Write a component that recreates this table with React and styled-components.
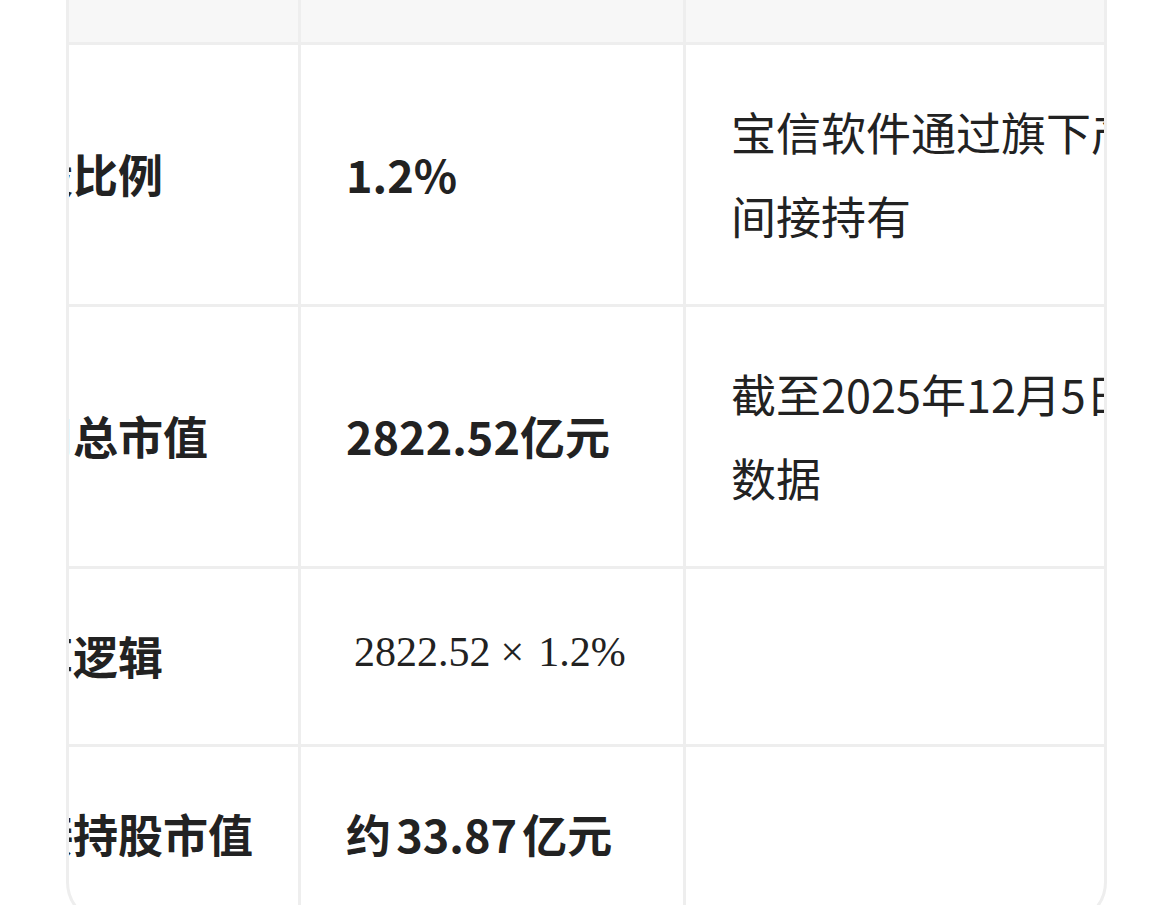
import React from "react";
import styled, { createGlobalStyle } from "styled-components";

const GlobalStyle = createGlobalStyle`
  html, body {
    margin: 0;
    padding: 0;
    background: #ffffff;
    overflow: hidden;
  }
  body {
    font-family: "Noto Sans CJK SC", "Noto Sans", sans-serif;
    color: #222222;
  }
`;

const Page = styled.div`
  width: 1149px;
  height: 905px;
  overflow: hidden;
`;

/* the page is scrolled: the header row sits above the top edge */
const Scroller = styled.div`
  margin-top: -136px;
  padding-left: 66px;
`;

const TableWrap = styled.div`
  width: 1041px;
  box-sizing: border-box;
  border: 3px solid #eeeeee;
  border-radius: 42px;
  overflow: hidden;
  background: #ffffff;
`;

const Table = styled.table`
  margin-left: -131px;
  border-collapse: separate;
  border-spacing: 0;
  table-layout: fixed;
  width: ${(p) => p.$width}px;
`;

const Cell = styled.td`
  box-sizing: border-box;
  padding: 45px;
  font-size: 45px;
  line-height: 84.6px;
  vertical-align: middle;
  text-align: left;
  color: #222222;
  font-weight: ${(p) => (p.$bold ? 700 : 400)};
  word-spacing: ${(p) => (p.$tight ? "-5px" : "normal")};
  border-right: ${(p) => (p.$last ? "none" : "3px solid #eeeeee")};
  border-bottom: ${(p) => (p.$lastRow ? "none" : "3px solid #eeeeee")};
  white-space: normal;
  word-break: break-all;
`;

const HeadCell = styled(Cell).attrs({ as: "th" })`
  background: #f7f7f7;
  font-weight: 700;
  width: ${(p) => p.$w}px;
`;

const Formula = styled.span`
  display: inline-block;
  margin-left: 8px;
  font-family: "Liberation Serif", "DejaVu Serif", serif;
  font-size: 42px;
  line-height: 1;
  font-weight: 400;
  vertical-align: 9px;
  white-space: nowrap;
`;

const Times = styled.span`
  margin: 0 14px 0 10px;
`;

const cols = [363, 385, 640];

const rows = [
  { label: "持股比例", value: "1.2%", note: "宝信软件通过旗下产业基金间接持有" },
  { label: "公司总市值", value: "2822.52亿元", note: "截至2025年12月5日收盘价数据" },
  { label: "计算逻辑", formula: true, note: "" },
  { label: "间接持股市值", value: "约 33.87 亿元", note: "", tight: true },
];

export default function App() {
  const total = cols.reduce((a, b) => a + b, 0);
  return (
    <Page>
      <GlobalStyle />
      <Scroller>
        <TableWrap>
          <Table $width={total}>
            <thead>
              <tr>
                <HeadCell $w={cols[0]}>项目</HeadCell>
                <HeadCell $w={cols[1]}>数值</HeadCell>
                <HeadCell $w={cols[2]} $last>
                  说明
                </HeadCell>
              </tr>
            </thead>
            <tbody>
              {rows.map((r, i) => {
                const lastRow = i === rows.length - 1;
                return (
                  <tr key={r.label}>
                    <Cell $bold $lastRow={lastRow}>
                      {r.label}
                    </Cell>
                    <Cell $bold $tight={r.tight} $lastRow={lastRow}>
                      {r.formula ? (
                        <Formula>
                          2822.52<Times>×</Times>1.2%
                        </Formula>
                      ) : (
                        r.value
                      )}
                    </Cell>
                    <Cell $last $lastRow={lastRow}>
                      {r.note}
                    </Cell>
                  </tr>
                );
              })}
            </tbody>
          </Table>
        </TableWrap>
      </Scroller>
    </Page>
  );
}
